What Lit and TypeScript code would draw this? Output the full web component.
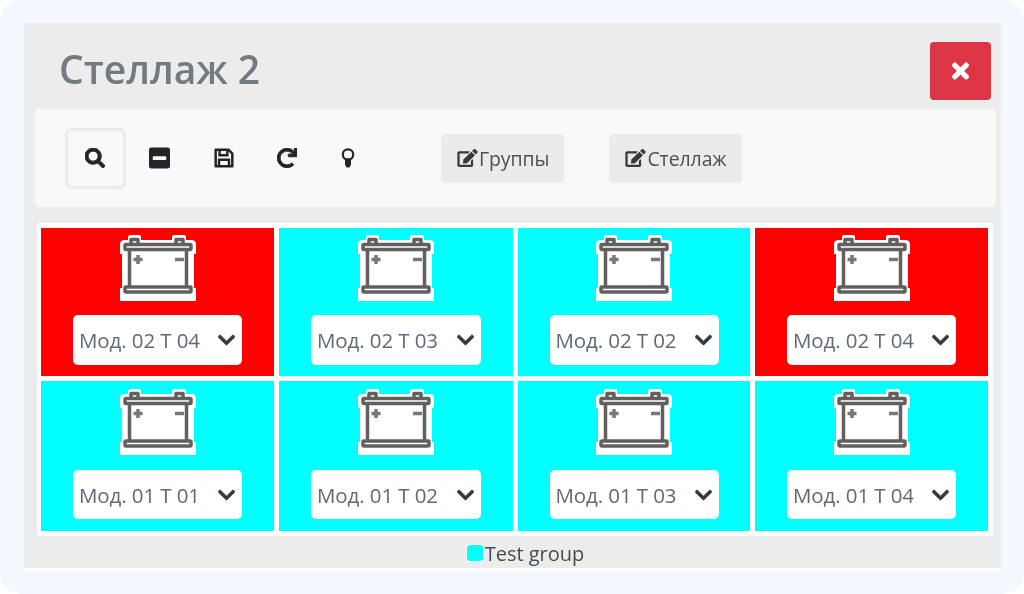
import { LitElement, html, css, svg } from "lit";
import { customElement } from "lit/decorators.js";

const P = {
  search: "M505 442.7L405.3 343c-4.5-4.5-10.6-7-17-7H372c27.6-35.3 44-79.7 44-128C416 93.1 322.9 0 208 0S0 93.1 0 208s93.1 208 208 208c48.3 0 92.7-16.4 128-44v16.3c0 6.4 2.5 12.5 7 17l99.7 99.7c9.4 9.4 24.6 9.4 33.9 0l28.3-28.3c9.4-9.4 9.4-24.6.1-34zM208 336c-70.7 0-128-57.2-128-128 0-70.7 57.2-128 128-128 70.7 0 128 57.2 128 128 0 70.7-57.2 128-128 128z",
  minus: "M400 32H48C21.5 32 0 53.5 0 80v352c0 26.5 21.5 48 48 48h352c26.5 0 48-21.5 48-48V80c0-26.5-21.5-48-48-48zM92 296c-6.6 0-12-5.4-12-12v-56c0-6.6 5.4-12 12-12h264c6.6 0 12 5.4 12 12v56c0 6.6-5.4 12-12 12H92z",
  redo: "M500.33 0h-47.41a12 12 0 0 0-12 12.57l4 82.76A247.42 247.42 0 0 0 256 8C119.34 8 8.33 119.53 8 256.19 7.67 393.18 118.82 504 256 504a247.1 247.1 0 0 0 166.18-63.91 12 12 0 0 0 .48-17.43l-34-34a12 12 0 0 0-16.38-.55A176 176 0 1 1 402.1 157.8l-101.53-4.87a12 12 0 0 0-12.57 12v47.41a12 12 0 0 0 12 12h200.33a12 12 0 0 0 12-12V12a12 12 0 0 0-12-12z",
  edit: "M402.6 83.2l90.2 90.2c3.8 3.8 3.8 10 0 13.8L274.4 405.6l-92.8 10.3c-12.4 1.4-22.9-9.1-21.5-21.5l10.3-92.8L388.8 83.2c3.8-3.8 10-3.8 13.8 0zm162-22.9l-48.8-48.8c-15.2-15.2-39.9-15.2-55.2 0l-35.4 35.4c-3.8 3.8-3.8 10 0 13.8l90.2 90.2c3.8 3.8 10 3.8 13.8 0l35.4-35.4c15.2-15.3 15.2-40 0-55.2zM384 346.2V448H64V128h229.8c3.2 0 6.2-1.3 8.5-3.5l40-40c7.6-7.6 2.2-20.5-8.5-20.5H48C21.5 64 0 85.5 0 112v352c0 26.5 21.5 48 48 48h352c26.5 0 48-21.5 48-48V306.2c0-10.7-12.9-16-20.5-8.5l-40 40c-2.2 2.3-3.5 5.3-3.5 8.5z",
  times: "M242.72 256l100.07-100.07c12.28-12.28 12.28-32.19 0-44.48l-22.24-22.24c-12.28-12.28-32.19-12.28-44.48 0L176 189.28 75.93 89.21c-12.28-12.28-32.19-12.28-44.48 0L9.21 111.45c-12.28 12.28-12.28 32.19 0 44.48L109.28 256 9.21 356.07c-12.28 12.28-12.28 32.19 0 44.48l22.24 22.24c12.28 12.28 32.2 12.28 44.48 0L176 322.72l100.07 100.07c12.28 12.28 32.2 12.28 44.48 0l22.24-22.24c12.28-12.28 12.28-32.19 0-44.48L242.72 256z",
  chevron: "M207.029 381.476L12.686 187.132c-9.373-9.373-9.373-24.569 0-33.941l22.667-22.667c9.357-9.357 24.522-9.375 33.901-.04L224 284.505l154.745-154.021c9.379-9.335 24.544-9.317 33.901.04l22.667 22.667c9.373 9.373 9.373 24.569 0 33.941L240.971 381.476c-9.373 9.372-24.569 9.372-33.942 0z",
};

const icon = (d: string, vb: string, cls: string) =>
  html`<svg class=${cls} viewBox=${vb} fill="currentColor"><path d=${d}></path></svg>`;

const saveIcon = html`<svg class="i-save" viewBox="0 0 18 18" fill="none" stroke="#212529" stroke-width="2.2">
  <path d="M2 1.5h11l3.5 3.5v11.5h-15v-15z" stroke-linejoin="round"></path>
  <path d="M5 2v4.5h7V2"></path>
  <path d="M4.5 16.5v-6h9v6"></path>
</svg>`;

const bulbIcon = html`<svg class="i-bulb" viewBox="0 0 14 20">
  <circle cx="7" cy="6.5" r="5.2" fill="none" stroke="#212529" stroke-width="2.2"></circle>
  <path d="M4 10.5h6v6l-1.5 3h-3l-1.5-3z" fill="#212529"></path>
</svg>`;

const battery = svg`
  <path d="M0 67V54H2V20H0V10Q0 6 5 6H8V3Q8 1 10 1H19Q21 1 21 3V6H52V3Q52 1 54 1H64Q66 1 66 3V6H71Q76 6 76 10V20H74V54H76V67Z" fill="#fff"></path>
  <g fill="none" stroke="#625f5f" stroke-linejoin="round" stroke-width="3.5">
    <rect x="5" y="10.5" width="66" height="5" rx="1"></rect>
    <rect x="5" y="53" width="66" height="5" rx="1"></rect>
    <path d="M9.5 16v36M66.5 16v36"></path>
    <path d="M11 9V5.5h7V9M56 9V5.5h7V9"></path>
    <path d="M13.5 25.5h9M18 21v9M55 25.5h9" stroke-opacity=".85"></path>
  </g>
`;

type Cell = { color: "red" | "cyan"; label: string };
const CELLS: Cell[] = [
  { color: "red", label: "Мод. 02 Т 04" },
  { color: "cyan", label: "Мод. 02 Т 03" },
  { color: "cyan", label: "Мод. 02 Т 02" },
  { color: "red", label: "Мод. 02 Т 04" },
  { color: "cyan", label: "Мод. 01 Т 01" },
  { color: "cyan", label: "Мод. 01 Т 02" },
  { color: "cyan", label: "Мод. 01 Т 03" },
  { color: "cyan", label: "Мод. 01 Т 04" },
];

@customElement("app-root")
export class AppRoot extends LitElement {
  static styles = css`
    :host {
      display: block;
      width: 1024px;
      height: 594px;
      background: #fff;
      font-family: "Open Sans", "Noto Sans", sans-serif;
      overflow: hidden;
    }
    .frame {
      box-sizing: border-box;
      height: 594px;
      padding: 23px 23px 23px 24px;
      background: #f3f8fe;
      border-radius: 22px;
      filter: blur(0.5px);
    }
    .panel {
      height: 548px;
      box-sizing: border-box;
      background: #ebeceb;
      border-bottom: 3px solid #fff;
      border-bottom-left-radius: 4px;
      display: flex;
      flex-direction: column;
    }
    .head {
      height: 86px;
      box-sizing: border-box;
      display: flex;
      justify-content: space-between;
      padding: 19px 10px 0 35px;
    }
    h1 {
      margin: -2px 0 0;
      font-size: 39px;
      line-height: 58px;
      font-weight: 600;
      color: #727a82;
    }
    .close {
      width: 61px;
      height: 58px;
      background: #dc3545;
      border-radius: 4px;
      color: #fff;
      display: flex;
      align-items: center;
      justify-content: center;
    }
    .i-times { width: 17px; height: 24px; stroke: currentColor; stroke-width: 20; }
    .toolbar {
      margin: 0 5px 0 11px;
      height: 98px;
      background: #f8f9fa;
      border-radius: 5px;
      display: flex;
      align-items: center;
      padding-left: 30px;
      color: #212529;
    }
    .tool {
      width: 61px;
      height: 61px;
      box-sizing: border-box;
      display: flex;
      align-items: center;
      justify-content: center;
      border-radius: 7px;
      margin-right: 3px;
    }
    .tool.active { border: 3px solid #e9ecef; }
    .tool.bulb { width: 54px; margin-right: 66px; }
    .i-search { width: 20px; height: 20px; stroke: currentColor; stroke-width: 24; margin-left: -2px; }
    .i-minus { width: 21px; height: 24px; }
    .i-save { width: 20px; height: 20px; }
    .i-redo { width: 20px; height: 20px; stroke: currentColor; stroke-width: 24; margin-left: -2px; }
    .i-bulb { width: 14px; height: 20px; }
    .btn {
      height: 49px;
      box-sizing: border-box;
      padding: 0 15px 0 16px;
      background: #ebebeb;
      border-radius: 4px;
      display: flex;
      align-items: center;
      font-size: 19.5px;
      letter-spacing: -0.1px;
      color: #495057;
      margin-right: 45px;
    }
    .i-edit { width: 21px; height: 18px; margin-right: 1px; color: #343a40; }
    .wrap {
      margin: 16px 8px 0 13px;
      height: 313px;
      box-sizing: border-box;
      background: #fff;
      padding: 5px 5px 5px 4px;
      display: grid;
      grid-template-columns: 233px 234px 232px 233px;
      grid-template-rows: 148px 150px;
      gap: 5px;
    }
    .cell {
      display: flex;
      flex-direction: column;
      align-items: center;
      padding-top: 6px;
      box-sizing: border-box;
    }
    .cell:nth-child(n + 5) { padding-top: 7px; }
    .cell.red { background: #ff0000; }
    .cell.cyan { background: #00ffff; }
    .batt { width: 76px; height: 67px; display: block; }
    .select {
      margin-top: 14px;
      width: 169px;
      height: 50px;
      box-sizing: border-box;
      padding: 0 7px 0 6px;
      background: #fff;
      border-radius: 5px;
      display: flex;
      align-items: center;
      justify-content: space-between;
      font-size: 20.5px;
      letter-spacing: -0.1px;
      color: #5f6a74;
    }
    .cell:nth-child(n + 5) .select { margin-top: 15px; height: 49px; }
    .cell:nth-child(4n + 2) .select { width: 170px; }
    .i-chevron { width: 17px; height: 20px; color: #343a40; stroke: currentColor; stroke-width: 16; }
    .legend {
      flex: 1;
      display: flex;
      align-items: center;
      justify-content: center;
      font-size: 20px;
      color: #454c53;
      padding: 2px 0 0 26px;
    }
    .swatch {
      width: 16px;
      height: 16px;
      background: #00ffff;
      border-radius: 3px;
      box-shadow: 0 0 0 1px #fff;
      margin-right: 2px;
    }
  `;

  render() {
    return html`
      <div class="frame">
        <div class="panel">
          <div class="head">
            <h1>Стеллаж 2</h1>
            <div class="close">${icon(P.times, "0 0 352 512", "i-times")}</div>
          </div>
          <div class="toolbar">
            <div class="tool active">${icon(P.search, "0 0 512 512", "i-search")}</div>
            <div class="tool">${icon(P.minus, "0 0 448 512", "i-minus")}</div>
            <div class="tool">${saveIcon}</div>
            <div class="tool">${icon(P.redo, "0 0 512 512", "i-redo")}</div>
            <div class="tool bulb">${bulbIcon}</div>
            <div class="btn">${icon(P.edit, "0 0 576 512", "i-edit")}Группы</div>
            <div class="btn">${icon(P.edit, "0 0 576 512", "i-edit")}Стеллаж</div>
          </div>
          <div class="wrap">
            ${CELLS.map(
              (c) => html`
                <div class="cell ${c.color}">
                  <svg class="batt" viewBox="0 0 76 67">${battery}</svg>
                  <div class="select">
                    <span>${c.label}</span>
                    ${icon(P.chevron, "0 0 448 512", "i-chevron")}
                  </div>
                </div>
              `
            )}
          </div>
          <div class="legend"><span class="swatch"></span>Test group</div>
        </div>
      </div>
    `;
  }
}
